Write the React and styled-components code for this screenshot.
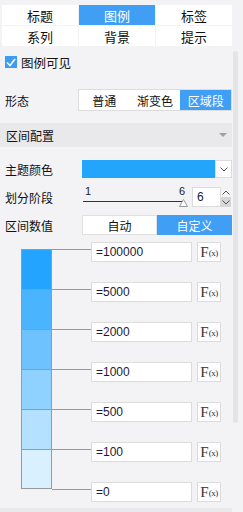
import styled, { createGlobalStyle } from 'styled-components';

const GlobalStyle = createGlobalStyle`
    body {
        margin: 0;
        background: #f3f3f5;
        font-family: "Noto Sans CJK SC", "Liberation Sans", sans-serif;
    }
`;

const BLUE = '#409ef5';

const Shell = styled.div`
    display: flex;
    width: 243px;
    height: 512px;
    overflow: hidden;
    background: #f3f3f5;
`;

const Panel = styled.div`
    width: 232px;
    height: 512px;
    overflow: hidden;
    flex: none;
    display: flex;
    flex-direction: column;
`;

const ScrollTrack = styled.div`
    flex: 1;
    padding: 51px 0 0 1px;
`;

const ScrollThumb = styled.div`
    width: 5px;
    height: 372px;
    border-radius: 3px;
    background: #e4e4e6;
`;

const TabGrid = styled.div`
    display: grid;
    grid-template-columns: repeat(3, 1fr);
    gap: 1px;
    margin: 5px 0 0 2px;
    flex: none;
`;

const Tab = styled.div`
    height: 20px;
    display: flex;
    align-items: center;
    justify-content: center;
    font-size: 13px;
    background: ${p => (p.$active ? BLUE : '#fff')};
    color: ${p => (p.$active ? '#fff' : '#111')};
`;

const Row = styled.div`
    display: flex;
    align-items: center;
    flex: none;
    height: ${p => p.$h}px;
    padding-left: 5px;
    margin-top: ${p => p.$mt || 0}px;
`;

const Label = styled.div`
    width: ${p => p.$w}px;
    flex: none;
    font-size: 12px;
    color: #111;
`;

const CheckBox = styled.div`
    width: 12px;
    height: 12px;
    background: #3d9cf3;
    display: flex;
    align-items: center;
    justify-content: center;
    margin-right: 4px;
`;

const CheckText = styled.span`
    font-size: 12.5px;
    color: #111;
`;

const Segmented = styled.div`
    flex: 1;
    display: flex;
    height: 22px;
    box-sizing: border-box;
    border: 1px solid #dcdcdc;
    background: #fff;
`;

const Segment = styled.div`
    flex: 1;
    display: flex;
    align-items: center;
    justify-content: center;
    font-size: 12px;
    background: ${p => (p.$active ? BLUE : 'transparent')};
    color: ${p => (p.$active ? '#fff' : '#111')};
`;

const SectionHeader = styled.div`
    height: 24px;
    flex: none;
    display: flex;
    align-items: center;
    justify-content: space-between;
    padding: 0 5px 0 6px;
    background: #e9e9eb;
    font-size: 12px;
    color: #111;
    margin-top: ${p => p.$mt || 0}px;
`;

const Caret = styled.div`
    width: 0;
    height: 0;
    border-left: 4px solid transparent;
    border-right: 4px solid transparent;
    border-top: 4px solid #a0a0a0;
`;

const ColorPicker = styled.div`
    flex: 1;
    display: flex;
    height: 18px;
`;

const ColorBar = styled.div`
    flex: 1;
    background: #22a5fb;
`;

const DropButton = styled.div`
    width: 17px;
    box-sizing: border-box;
    border: 1px solid #dcdcdc;
    background: #fff;
    display: flex;
    align-items: center;
    justify-content: center;
`;

const Slider = styled.div`
    width: 107px;
    height: 24px;
    display: flex;
    flex-direction: column;
    padding-left: 1px;
`;

const SliderLabels = styled.div`
    display: flex;
    justify-content: space-between;
    width: 100px;
    font-family: "Liberation Sans", sans-serif;
    font-size: 11px;
    line-height: 12px;
    color: #222;
    padding-left: 2px;
`;

const SliderTrack = styled.div`
    display: flex;
    align-items: flex-start;
    margin-top: 2px;
`;

const SliderLine = styled.div`
    width: 100px;
    height: 1px;
    background: #333;
    margin-top: 2px;
`;

const Thumb = styled.svg`
    margin-left: -4px;
    flex: none;
`;

const NumberBox = styled.div`
    display: flex;
    margin-left: 2px;
    height: 20px;
`;

const NumberInput = styled.div`
    width: 29px;
    box-sizing: border-box;
    border: 1px solid #dcdcdc;
    background: #fff;
    font-family: "Liberation Sans", sans-serif;
    font-size: 12px;
    display: flex;
    align-items: center;
    padding-left: 4px;
    color: #1a1a3a;
`;

const Spinner = styled.div`
    width: 10px;
    display: flex;
    flex-direction: column;
`;

const SpinHalf = styled.div`
    flex: 1;
    display: flex;
    align-items: center;
    justify-content: center;
    background: ${p => (p.$shade ? '#d6d6d6' : 'transparent')};
`;

const Toggle = styled.div`
    flex: 1;
    display: flex;
    height: 20px;
`;

const ToggleItem = styled.div`
    flex: 1;
    display: flex;
    align-items: center;
    justify-content: center;
    font-size: 12px;
    box-sizing: border-box;
    background: ${p => (p.$active ? BLUE : '#fff')};
    color: ${p => (p.$active ? '#fff' : '#111')};
    border: 1px solid ${p => (p.$active ? BLUE : '#e0e0e0')};
`;

const Legend = styled.div`
    display: flex;
    flex: none;
    padding-left: 21px;
    margin-top: 3px;
`;

const ColorStack = styled.div`
    width: 31px;
    margin-top: 7px;
    align-self: flex-start;
    box-sizing: border-box;
    border: 1px solid #999;
    border-top: none;
    flex: none;
`;

const Band = styled.div`
    height: ${p => p.$h}px;
    box-sizing: border-box;
    border-top: 1px solid #999;
    background: ${p => p.$color};
`;

const StopList = styled.div`
    display: flex;
    flex-direction: column;
`;

const Stop = styled.div`
    display: flex;
    align-items: flex-start;
    height: ${p => p.$h}px;
    flex: none;
`;

const Connector = styled.div`
    width: 39px;
    height: 1px;
    margin-top: 7px;
    background: #999;
`;

const ValueInput = styled.div`
    width: 101px;
    height: 20px;
    box-sizing: border-box;
    border: 1px solid #dcdcdc;
    background: #fff;
    font-family: "Liberation Sans", sans-serif;
    font-size: 12px;
    color: #1a1a3a;
    display: flex;
    align-items: center;
    padding-left: 4px;
`;

const FxButton = styled.div`
    width: 24px;
    height: 20px;
    margin-left: 5px;
    box-sizing: border-box;
    border: 1px solid #dcdcdc;
    background: #fff;
    display: flex;
    align-items: center;
    justify-content: center;
    font-family: "Liberation Serif", serif;
    color: #333;
`;

const FxF = styled.span`
    font-size: 15px;
    line-height: 14px;
`;

const FxX = styled.span`
    font-size: 9px;
    line-height: 14px;
    margin-top: 2px;
    letter-spacing: -0.5px;
`;

const tabs = [
    { label: '标题' },
    { label: '图例', active: true },
    { label: '标签' },
    { label: '系列' },
    { label: '背景' },
    { label: '提示' },
];

const bands = ['#22a4ff', '#4bb4ff', '#6ec3ff', '#90d2ff', '#b4e1ff', '#d9f0ff'];
const stops = ['=100000', '=5000', '=2000', '=1000', '=500', '=100', '=0'];

const Chevron = ({ up }) => (
    <svg width="8" height="5" viewBox="0 0 8 5">
        <path d={up ? 'M0.5 4.5 L4 1 L7.5 4.5' : 'M0.5 0.5 L4 4 L7.5 0.5'} fill="none" stroke="#555" strokeWidth="1" />
    </svg>
);

const App = () => {
    return (
        <Shell>
            <GlobalStyle />
            <Panel>
                <TabGrid>
                    {tabs.map(t => (
                        <Tab key={t.label} $active={t.active}>{t.label}</Tab>
                    ))}
                </TabGrid>

                <Row $h={32}>
                    <CheckBox>
                        <svg width="10" height="9" viewBox="0 0 10 9">
                            <path d="M1 4.5 L4 7.5 L9 1" fill="none" stroke="#fff" strokeWidth="1.6" />
                        </svg>
                    </CheckBox>
                    <CheckText>图例可见</CheckText>
                </Row>

                <Row $h={44}>
                    <Label $w={73}>形态</Label>
                    <Segmented>
                        <Segment>普通</Segment>
                        <Segment>渐变色</Segment>
                        <Segment $active>区域段</Segment>
                    </Segmented>
                </Row>

                <SectionHeader $mt={1}>
                    区间配置
                    <Caret />
                </SectionHeader>

                <Row $h={28} $mt={8}>
                    <Label $w={77}>主题颜色</Label>
                    <ColorPicker>
                        <ColorBar />
                        <DropButton><Chevron /></DropButton>
                    </ColorPicker>
                </Row>

                <Row $h={28}>
                    <Label $w={77}>划分阶段</Label>
                    <Slider>
                        <SliderLabels><span>1</span><span>6</span></SliderLabels>
                        <SliderTrack>
                            <SliderLine />
                            <Thumb width="9" height="8" viewBox="0 0 9 8">
                                <path d="M4.5 0.5 L8.5 7.5 L0.5 7.5 Z" fill="#fff" stroke="#999" strokeWidth="1" />
                            </Thumb>
                        </SliderTrack>
                    </Slider>
                    <NumberBox>
                        <NumberInput>6</NumberInput>
                        <Spinner>
                            <SpinHalf><Chevron up /></SpinHalf>
                            <SpinHalf $shade><Chevron /></SpinHalf>
                        </Spinner>
                    </NumberBox>
                </Row>

                <Row $h={28}>
                    <Label $w={77}>区间数值</Label>
                    <Toggle>
                        <ToggleItem>自动</ToggleItem>
                        <ToggleItem $active>自定义</ToggleItem>
                    </Toggle>
                </Row>

                <Legend>
                    <ColorStack>
                        {bands.map((c, i) => (
                            <Band key={c} $color={c} $h={i === bands.length - 1 ? 39 : 40} />
                        ))}
                    </ColorStack>
                    <StopList>
                        {stops.map((s, i) => (
                            <Stop key={s} $h={i === stops.length - 1 ? 26 : 40}>
                                <Connector />
                                <ValueInput>{s}</ValueInput>
                                <FxButton><FxF>F</FxF><FxX>(x)</FxX></FxButton>
                            </Stop>
                        ))}
                    </StopList>
                </Legend>

                <SectionHeader />
            </Panel>
            <ScrollTrack>
                <ScrollThumb />
            </ScrollTrack>
        </Shell>
    );
};

export default App;
